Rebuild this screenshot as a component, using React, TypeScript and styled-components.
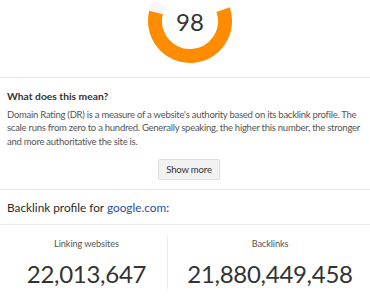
import styled, { createGlobalStyle } from 'styled-components';

const GlobalStyle = createGlobalStyle`
  body {
    margin: 0;
    background: #fff;
    font-family: Lato, "Open Sans", Arial, sans-serif;
    color: #333;
  }
`;

const stats = [
  { label: 'Linking websites', value: '22,013,647' },
  { label: 'Backlinks', value: '21,880,449,458' },
];

function describeArc(cx: number, cy: number, r: number, startDeg: number, endDeg: number) {
  // angles in degrees, measured clockwise from the positive x axis (svg coords)
  const toXY = (deg: number) => {
    const rad = (deg * Math.PI) / 180;
    return [cx + r * Math.cos(rad), cy + r * Math.sin(rad)];
  };
  const [x1, y1] = toXY(startDeg);
  const [x2, y2] = toXY(endDeg);
  const large = endDeg - startDeg > 180 ? 1 : 0;
  return `M ${x1} ${y1} A ${r} ${r} 0 ${large} 1 ${x2} ${y2}`;
}

export default function App() {
  return (
    <Page>
      <GlobalStyle />
      <GaugeSection>
        <GaugeBox>
          <svg width="84" height="84" viewBox="0 0 84 84">
            <path d={describeArc(42, 42, 35, 193, 210)} stroke="#f6f6f6" strokeWidth="14" fill="none" />
            <path d={describeArc(42, 42, 35, -19, 194)} stroke="#ff8c00" strokeWidth="14" fill="none" />
          </svg>
          <Score>98</Score>
        </GaugeBox>
      </GaugeSection>

      <InfoSection>
        <InfoTitle>What does this mean?</InfoTitle>
        <InfoText>
          Domain Rating (DR) is a measure of a website's authority based on its backlink profile. The
          scale runs from zero to a hundred. Generally speaking, the higher this number, the stronger
          and more authoritative the site is.
        </InfoText>
        <ButtonRow>
          <ShowMoreButton>Show more</ShowMoreButton>
        </ButtonRow>
      </InfoSection>

      <ProfileHeader>
        Backlink profile for <DomainLink>google.com</DomainLink>:
      </ProfileHeader>

      <StatsGrid>
        {stats.map((s, i) => (
          <StatCell key={s.label} $divider={i > 0}>
            <StatLabel>{s.label}</StatLabel>
            <StatValue>{s.value}</StatValue>
          </StatCell>
        ))}
      </StatsGrid>
    </Page>
  );
}

const Page = styled.div`
  width: 370px;
  height: 300px;
  overflow: hidden;
`;

const GaugeSection = styled.div`
  height: 77px;
  border-bottom: 1px solid #ececec;
  display: flex;
  justify-content: center;
  overflow: hidden;
`;

const GaugeBox = styled.div`
  position: relative;
  width: 84px;
  height: 84px;
  margin-top: -21px;
  margin-left: 10px;

  svg {
    display: block;
  }
`;

const Score = styled.div`
  position: absolute;
  left: 0;
  right: 0;
  top: 28px;
  text-align: center;
  font-size: 24px;
  line-height: 30px;
  color: #333;
`;

const InfoSection = styled.div`
  padding: 11px 7px 9px;
  border-bottom: 1px solid #ececec;
`;

const InfoTitle = styled.h3`
  margin: 0;
  font-size: 10.3px;
  line-height: 15px;
  font-weight: 700;
  color: #333;
`;

const InfoText = styled.p`
  margin: 4px 0 0;
  font-size: 9.5px;
  line-height: 13.3px;
  letter-spacing: -0.26px;
  color: #555;
`;

const ButtonRow = styled.div`
  display: flex;
  justify-content: center;
  margin-top: 11px;
`;

const ShowMoreButton = styled.button`
  width: 62px;
  height: 21px;
  padding: 0;
  margin-left: 8px;
  background: #f2f2f2;
  border: 1px solid #dcdcdc;
  border-radius: 2px;
  font-family: Lato, Arial, sans-serif;
  font-size: 9.6px;
  letter-spacing: -0.2px;
  color: #333;
`;

const ProfileHeader = styled.div`
  height: 33px;
  padding: 1px 7px 0;
  display: flex;
  align-items: center;
  border-bottom: 1px solid #ececec;
  font-size: 11.8px;
  color: #2b2b2b;
  white-space: pre;
`;

const DomainLink = styled.span`
  color: #1f4e9d;
`;

const StatsGrid = styled.div`
  display: grid;
  grid-template-columns: 167px 1fr;
  padding-top: 11px;
`;

const StatCell = styled.div<{ $divider: boolean }>`
  display: flex;
  flex-direction: column;
  align-items: center;
  border-left: ${(p) => (p.$divider ? '1px solid #ececec' : 'none')};
  padding-left: ${(p) => (p.$divider ? '2px' : '6px')};
`;

const StatLabel = styled.div`
  margin-top: 2px;
  font-size: 9.2px;
  line-height: 12px;
  letter-spacing: -0.1px;
  color: #555;
`;

const StatValue = styled.div`
  margin-top: 9px;
  font-size: 24px;
  line-height: 30px;
  letter-spacing: -0.3px;
  color: #333;
`;
